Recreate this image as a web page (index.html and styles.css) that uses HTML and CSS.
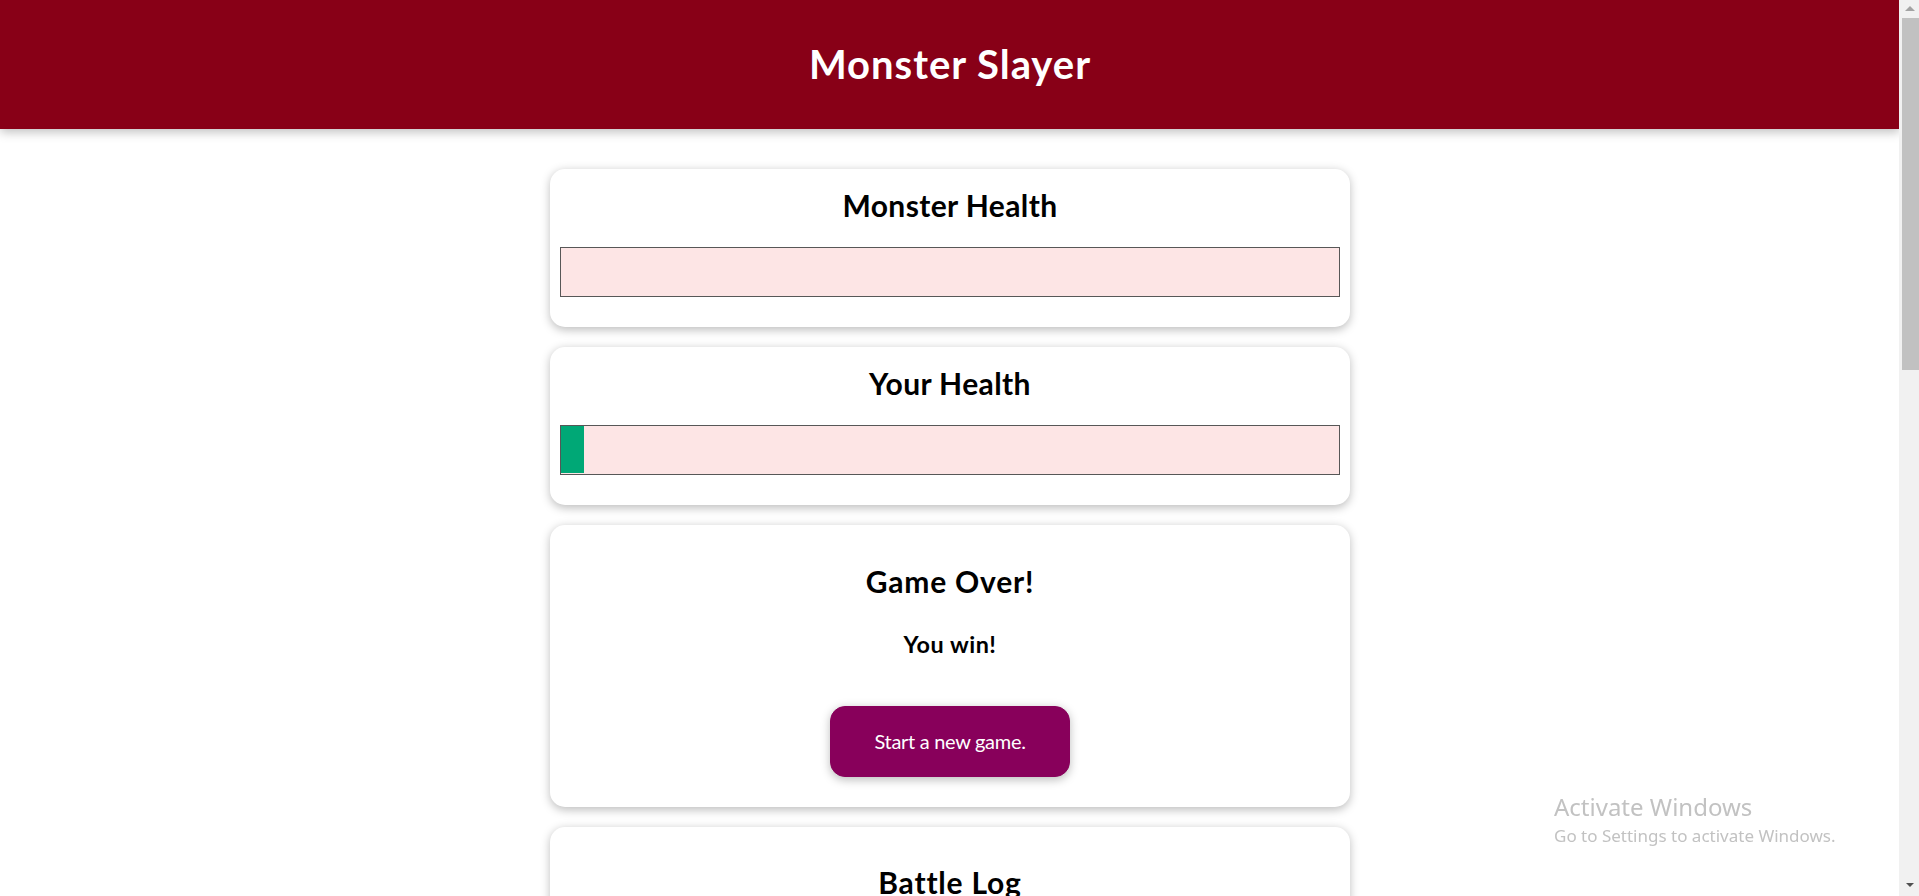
FILE: index.html
```html
<!DOCTYPE html>
<html lang="en">
<head>
<meta charset="UTF-8">
<title>Vue Basics</title>
<link rel="stylesheet" href="styles.css">
</head>
<body>
<div class="page">
  <header class="page-header">
    <h1 class="page-title">Monster Slayer</h1>
  </header>
  <main class="game">
    <section class="container">
      <h2 class="card-title">Monster Health</h2>
      <div class="healthbar">
        <div class="healthbar__value" style="width: 0%"></div>
      </div>
    </section>
    <section class="container">
      <h2 class="card-title">Your Health</h2>
      <div class="healthbar">
        <div class="healthbar__value" style="width: 3%"></div>
      </div>
    </section>
    <section class="container">
      <h2 class="result-title">Game Over!</h2>
      <h3 class="result-text">You win!</h3>
      <button class="btn">Start a new game.</button>
    </section>
    <section class="container log-card">
      <h2 class="result-title">Battle Log</h2>
      <ul class="log-list"></ul>
    </section>
  </main>
</div>
<div class="scrollbar" aria-hidden="true">
  <div class="scrollbar__up"></div>
  <div class="scrollbar__thumb"></div>
  <div class="scrollbar__down"></div>
</div>
<div class="watermark">
  <div class="watermark__title">Activate Windows</div>
  <div class="watermark__text">Go to Settings to activate Windows.</div>
</div>
</body>
</html>
```

FILE: styles.css
```css
* {
  box-sizing: border-box;
}

html {
  font-family: "Lato", "Noto Sans", sans-serif;
  font-size: 20px;
}

body {
  margin: 0;
  line-height: 1.445;
  color: #000;
  background: #fff;
  overflow: hidden;
}

.page {
  margin-right: 19px;
}

.page-header {
  padding: 10px;
  background-color: #880017;
  color: #fff;
  text-align: center;
  margin-bottom: 40px;
  box-shadow: 0 2.5px 10px rgba(0, 0, 0, 0.26);
}

.page-title {
  font-size: 40px;
  font-weight: 700;
  margin: 26.8px 0;
  line-height: 55px;
  letter-spacing: 1px;
}

.container {
  width: 90%;
  max-width: 800px;
  margin: 20px auto;
  text-align: center;
  padding: 10px;
  box-shadow: 0 2.5px 10px rgba(0, 0, 0, 0.26);
  border-radius: 15px;
  background: #fff;
}

.log-card {
  min-height: 400px;
}

.card-title {
  font-size: 30px;
  font-weight: 700;
  margin: 5px;
  line-height: 43.35px;
  letter-spacing: 0.4px;
}

.healthbar {
  width: 100%;
  height: 50px;
  border: 1px solid #575757;
  margin: 20px 0;
  background: #fde5e5;
}

.healthbar__value {
  background-color: #00a876;
  height: 47px;
}

.result-title {
  font-size: 30px;
  font-weight: 700;
  margin: 24.9px 0;
  line-height: 43.35px;
  letter-spacing: 0.8px;
}

.result-text {
  font-size: 23.4px;
  font-weight: 700;
  margin: 23.4px 0;
  line-height: 33.8px;
  letter-spacing: 0.5px;
}

.btn {
  font: inherit;
  font-size: 20px;
  line-height: 28.9px;
  letter-spacing: -0.3px;
  border: 1px solid #88005b;
  background-color: #88005b;
  color: #fff;
  padding: 20px 40px;
  border-radius: 15px;
  margin: 20px;
  width: 240px;
  cursor: pointer;
  box-shadow: 0 2.5px 10px rgba(0, 0, 0, 0.26);
}

.log-list {
  list-style: none;
  margin: 0;
  padding: 0;
}

/* decorative classic scrollbar */
.scrollbar {
  position: fixed;
  top: 0;
  right: 0;
  width: 20px;
  height: 100%;
  background: #f1f1f1;
  display: flex;
  flex-direction: column;
  align-items: center;
}

.scrollbar__up {
  margin-top: 6px;
  margin-left: 2px;
  width: 0;
  height: 0;
  border-left: 5px solid transparent;
  border-right: 5px solid transparent;
  border-bottom: 5px solid #a3a3a3;
}

.scrollbar__thumb {
  margin-top: 7px;
  margin-left: 2px;
  width: 17px;
  height: 352px;
  background: #c1c1c1;
}

.scrollbar__down {
  margin-top: auto;
  margin-bottom: 9px;
  margin-left: 2px;
  width: 0;
  height: 0;
  border-left: 4px solid transparent;
  border-right: 4px solid transparent;
  border-top: 4px solid #505050;
}

.watermark {
  position: fixed;
  left: 1554px;
  top: 792px;
  color: #c2c2c2;
  font-family: "Noto Sans", "Open Sans", sans-serif;
  pointer-events: none;
}

.watermark__title {
  font-size: 24px;
  line-height: 30px;
}

.watermark__text {
  font-size: 17px;
  line-height: 28px;
}
```
